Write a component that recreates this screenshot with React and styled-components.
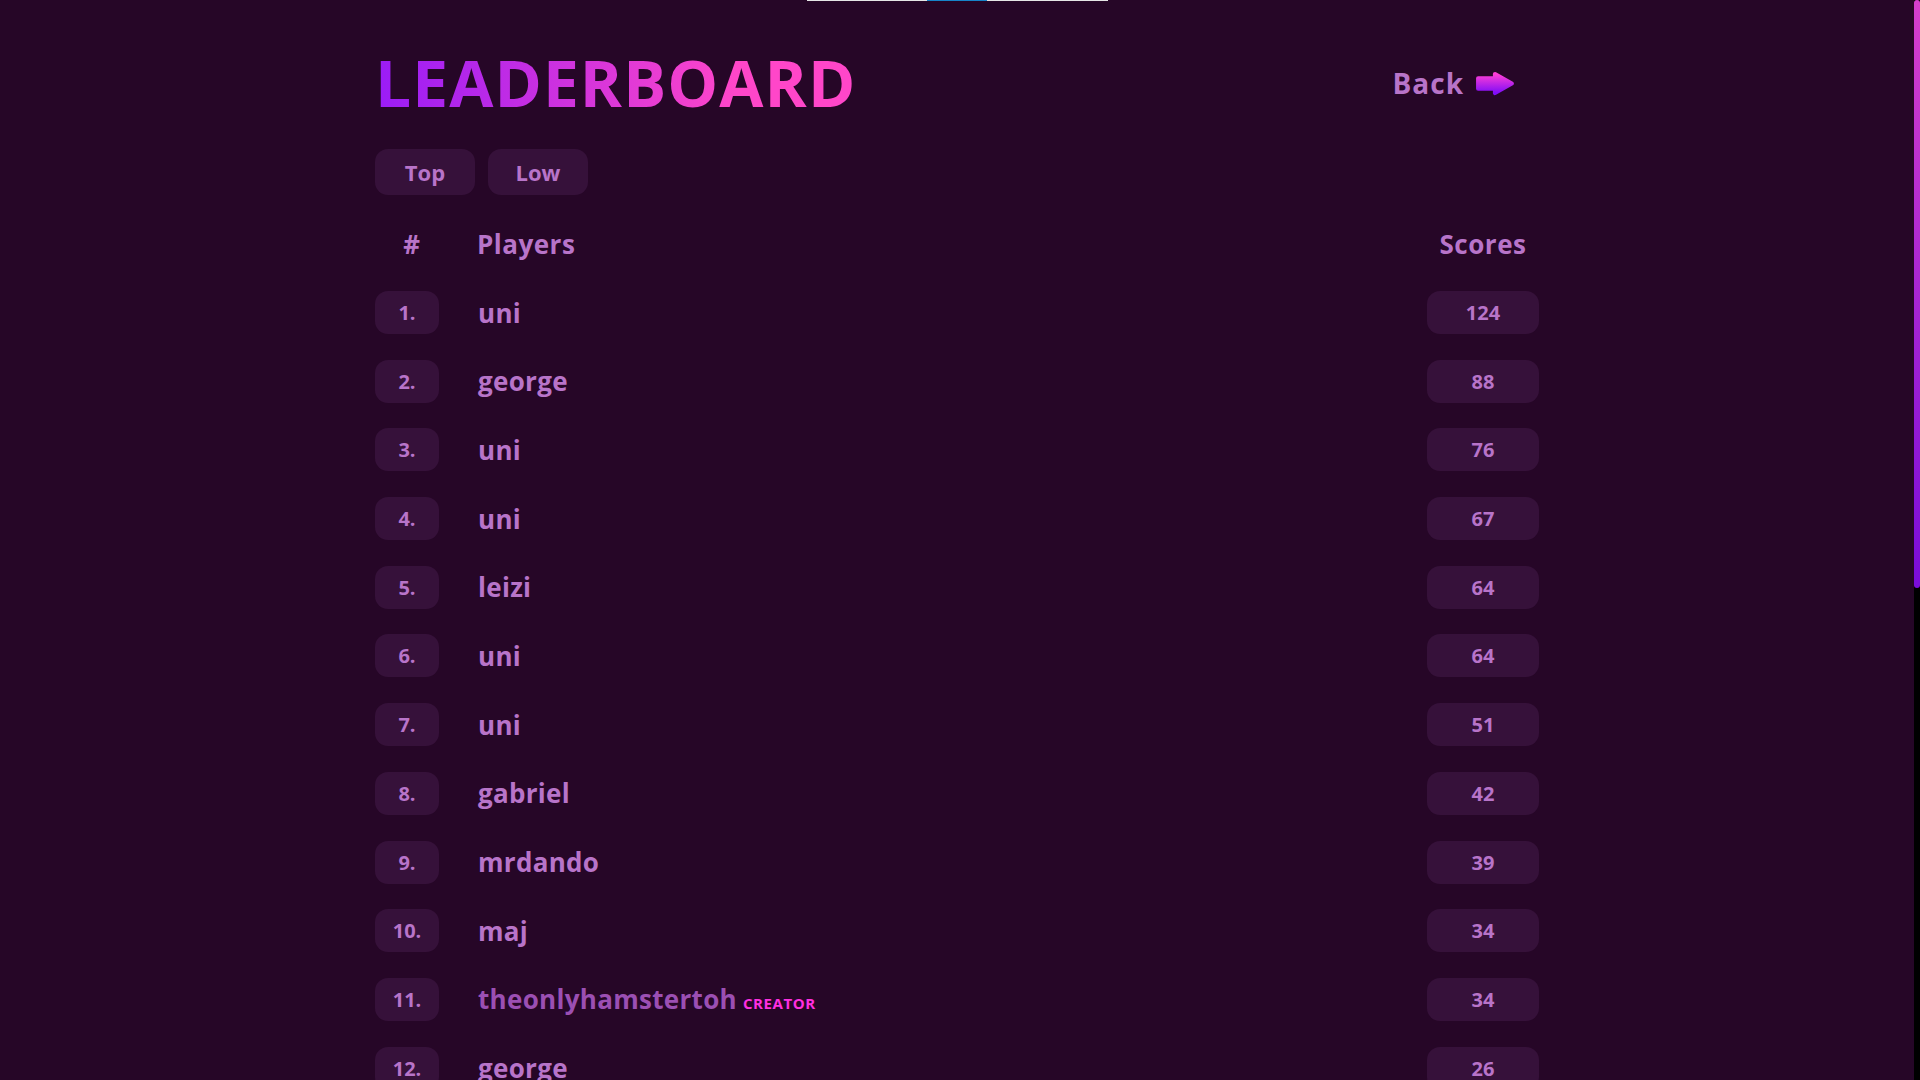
import React from 'react'
import styled, { createGlobalStyle } from 'styled-components'

const GlobalStyle = createGlobalStyle`
  html, body {
    margin: 0;
    padding: 0;
    background: #260627;
  }
  body {
    margin-right: 6px;
    font-family: "Open Sans", "Noto Sans", sans-serif;
    color: #b874c9;
  }
`

const players = [
  { name: 'uni', score: 124 },
  { name: 'george', score: 88 },
  { name: 'uni', score: 76 },
  { name: 'uni', score: 67 },
  { name: 'leizi', score: 64 },
  { name: 'uni', score: 64 },
  { name: 'uni', score: 51 },
  { name: 'gabriel', score: 42 },
  { name: 'mrdando', score: 39 },
  { name: 'maj', score: 34 },
  { name: 'theonlyhamstertoh', score: 34, creator: true },
  { name: 'george', score: 26 },
  { name: 'leizi', score: 24 },
  { name: 'uni', score: 22 },
  { name: 'maj', score: 19 },
  { name: 'gabriel', score: 17 },
  { name: 'uni', score: 15 },
  { name: 'mrdando', score: 13 },
  { name: 'george', score: 11 },
  { name: 'uni', score: 9 },
  { name: 'leizi', score: 8 },
  { name: 'uni', score: 6 },
  { name: 'maj', score: 4 },
  { name: 'uni', score: 2 },
]

// the page's own scrollbar, drawn since the headless shot hides native ones
const ScrollTrack = styled.div`
  position: fixed;
  top: 0;
  right: 0;
  width: 6px;
  height: 100vh;
  background: #000;
`

const ScrollThumb = styled.div`
  height: 588px;
  border-radius: 6px;
  background: linear-gradient(to bottom, #d63fcc, #7a0cd9);
`

const TopBar = styled.div`
  display: flex;
  width: 301px;
  height: 1px;
  margin: 0 auto;
`

const BarPart = styled.div`
  width: ${p => p.w}px;
  background: ${p => (p.active ? '#1784c9' : '#e6e6e6')};
`

const Page = styled.main`
  width: 1164px;
  margin: 0 auto;
  padding: 50px 0 70px;
`

const Header = styled.header`
  display: flex;
  align-items: center;
  justify-content: space-between;
  height: 64px;
`

const Title = styled.h1`
  margin: 0;
  font-size: 64px;
  line-height: 1;
  font-weight: 700;
  letter-spacing: 1.1px;
  background: linear-gradient(to right, #9a1cf6, #ff46c9 75%);
  -webkit-background-clip: text;
  background-clip: text;
  color: transparent;
`

const BackLink = styled.a`
  display: flex;
  align-items: center;
  gap: 11px;
  margin-right: 24px;
  font-size: 28px;
  line-height: 1;
  font-weight: 700;
  letter-spacing: 1px;
  color: #b874c9;
  text-decoration: none;
  cursor: pointer;
`

const Tabs = styled.div`
  display: flex;
  gap: 13px;
  margin-top: 34px;
`

const Tab = styled.button`
  width: 100px;
  height: 46px;
  border: 0;
  border-radius: 13px;
  background: #36113a;
  color: #b874c9;
  font-family: inherit;
  font-size: 22px;
  font-weight: 700;
  cursor: pointer;
`

const HeadRow = styled.div`
  display: flex;
  align-items: center;
  height: 26px;
  margin-top: 36px;
  font-size: 26px;
  line-height: 1;
  font-weight: 700;
  letter-spacing: 0.5px;
`

const RankHead = styled.div`
  width: 64px;
  padding-left: 10px;
  box-sizing: border-box;
  text-align: center;
`

const PlayersHead = styled.div`
  margin-left: 38px;
`

const ScoresHead = styled.div`
  width: 112px;
  margin-left: auto;
  text-align: center;
`

const List = styled.ol`
  display: flex;
  flex-direction: column;
  gap: 25.7px;
  margin: 34px 0 0;
  padding: 0;
  list-style: none;
`

const Row = styled.li`
  display: flex;
  align-items: center;
  height: 43px;
`

const Pill = styled.div`
  display: flex;
  align-items: center;
  justify-content: center;
  width: ${p => p.w}px;
  height: 43px;
  border-radius: 13px;
  background: #36113a;
  font-size: 20px;
  font-weight: 700;
`

const ScorePill = styled(Pill)`
  margin-left: auto;
`

const Name = styled.div`
  display: flex;
  align-items: baseline;
  gap: 6px;
  margin-left: 39px;
  font-size: 26px;
  font-weight: 700;
  letter-spacing: 0.3px;
  color: ${p => (p.creator ? '#9b4fb3' : '#b874c9')};
`

const Badge = styled.span`
  font-size: 15px;
  font-weight: 700;
  letter-spacing: 0.6px;
  text-transform: uppercase;
  color: #ff2fe0;
`

const ArrowIcon = () => (
  <svg width="40" height="25" viewBox="0 0 38 23">
    <defs>
      <linearGradient id="arrowGrad" x1="0" y1="0" x2="0" y2="1">
        <stop offset="0" stopColor="#ff3fd6" />
        <stop offset="1" stopColor="#7f0cf7" />
      </linearGradient>
    </defs>
    <path
      d="M3 6.5 H19 V2.5 L35 11.5 L19 20.5 V16.5 H3 Z"
      fill="url(#arrowGrad)"
      stroke="url(#arrowGrad)"
      strokeWidth="4"
      strokeLinejoin="round"
    />
  </svg>
)

export default function App() {
  return (
    <>
      <GlobalStyle />
      <TopBar>
        <BarPart w={120} />
        <BarPart w={60} active />
        <BarPart w={121} />
      </TopBar>
      <Page>
        <Header>
          <Title>LEADERBOARD</Title>
          <BackLink>
            Back
            <ArrowIcon />
          </BackLink>
        </Header>
        <Tabs>
          <Tab>Top</Tab>
          <Tab>Low</Tab>
        </Tabs>
        <HeadRow>
          <RankHead>#</RankHead>
          <PlayersHead>Players</PlayersHead>
          <ScoresHead>Scores</ScoresHead>
        </HeadRow>
        <List>
          {players.map((p, i) => (
            <Row key={i}>
              <Pill w={64}>{i + 1}.</Pill>
              <Name creator={p.creator}>
                {p.name}
                {p.creator && <Badge>Creator</Badge>}
              </Name>
              <ScorePill w={112}>{p.score}</ScorePill>
            </Row>
          ))}
        </List>
      </Page>
      <ScrollTrack>
        <ScrollThumb />
      </ScrollTrack>
    </>
  )
}
